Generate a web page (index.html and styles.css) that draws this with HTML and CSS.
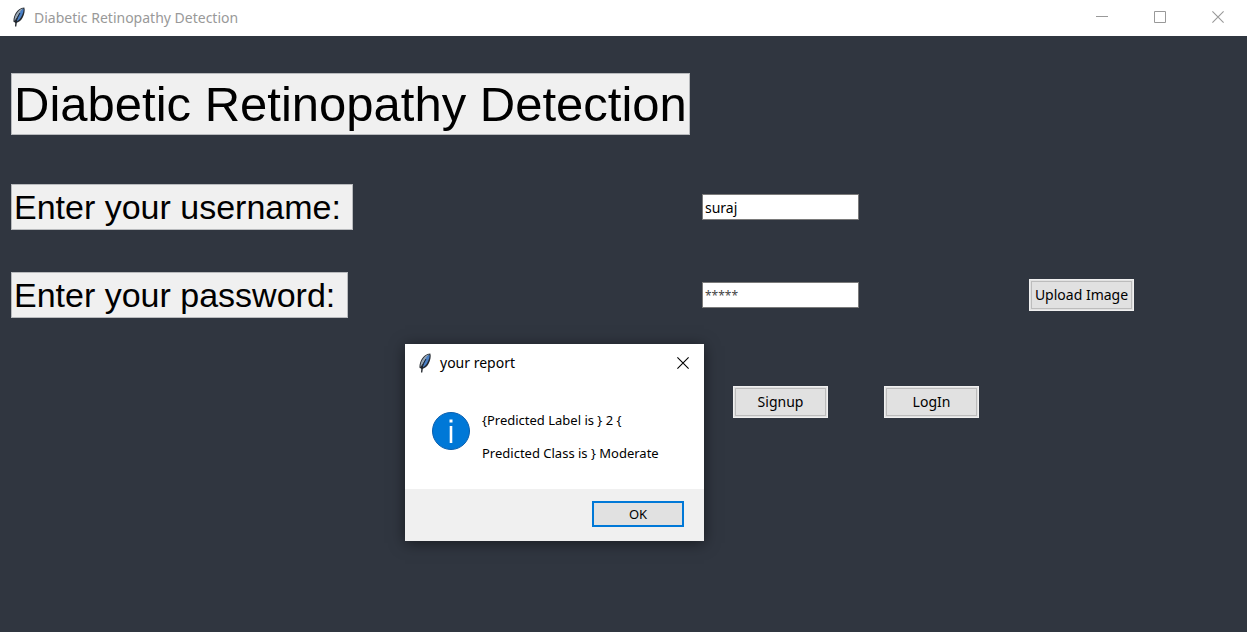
FILE: index.html
```html
<!DOCTYPE html>
<html lang="en">
<head>
<meta charset="utf-8">
<title>Diabetic Retinopathy Detection</title>
<link rel="stylesheet" href="styles.css">
</head>
<body>
<svg class="defs" width="0" height="0" aria-hidden="true">
  <symbol id="feather" viewBox="0 0 14 20">
    <path d="M12.300.4C8.500.6 5 3.300 3 7.500 1.700 10.300 1.200 13 1.600 15l1.700.5L3 19.500h1.300l.5-3.800c2.200-.4 4.500-2.300 5.900-5.200 1.700-3.400 2.600-7.200 1.600-10.100z" fill="#25292f"/>
    <path d="M11.200 1.200C8.200 1.800 5.300 4.500 3.700 8.100 2.700 10.300 2.300 12.500 2.500 14z" fill="#9aa8b5"/>
    <path d="M11.600 1.500C8.500 3 6.400 7 4.200 14.300c2-.5 4-2.300 5.200-4.800 1.400-2.700 2.500-5.500 2.200-8z" fill="#4a80c6"/>
    <path d="M8 6C6.500 8.500 5 11.500 3.700 16" fill="none" stroke="#19212c"/>
  </symbol>
  <symbol id="cross" viewBox="0 0 12 12">
    <path d="M.4.4l11.200 11.200M11.600.4L.4 11.600" fill="none" stroke="currentColor" stroke-width="1.100"/>
  </symbol>
</svg>

<header class="titlebar">
  <svg class="feather"><use href="#feather"/></svg>
  <span class="titlebar-text">Diabetic Retinopathy Detection</span>
  <div class="window-controls">
    <button class="window-button" type="button" aria-label="Minimize"><svg class="glyph" viewBox="0 0 12 12"><path d="M0 5.500h12" stroke="currentColor"/></svg></button>
    <button class="window-button" type="button" aria-label="Maximize"><svg class="glyph" viewBox="0 0 12 12"><path d="M.5.500h11v11H.5z" fill="none" stroke="currentColor"/></svg></button>
    <button class="window-button" type="button" aria-label="Close"><svg class="glyph"><use href="#cross"/></svg></button>
  </div>
</header>

<main class="window-body">
  <form class="login-form">
    <h1 class="heading">Diabetic Retinopathy Detection</h1>
    <label class="field-label username-label" for="username">Enter your username: </label>
    <input class="entry username-entry" id="username" type="text" value="suraj">
    <label class="field-label password-label" for="password">Enter your password: </label>
    <input class="entry masked password-entry" id="password" type="text" value="*****" autocomplete="off">
    <button class="button upload" type="button">Upload Image</button>
    <button class="button wide signup" type="button">Signup</button>
    <button class="button wide login" type="button">LogIn</button>
  </form>
</main>

<section class="dialog" role="dialog" aria-labelledby="dialog-title">
  <header class="dialog-bar">
    <svg class="feather"><use href="#feather"/></svg>
    <h2 class="dialog-title" id="dialog-title">your report</h2>
    <button class="dialog-close" type="button" aria-label="Close"><svg class="glyph"><use href="#cross"/></svg></button>
  </header>
  <div class="dialog-content">
    <svg class="info" viewBox="0 0 38 38" aria-hidden="true">
      <circle cx="19" cy="19" r="18.500" fill="#0078d7" stroke="#0a5fae"/>
      <path d="M17.500 7.500h3v3h-3zM17.700 14h2.600v17h-2.600z" fill="#fff"/>
    </svg>
    <div class="message">
      <p class="message-line">{Predicted Label is } 2 {</p>
      <p class="message-line">Predicted Class is } Moderate</p>
    </div>
  </div>
  <footer class="dialog-footer">
    <button class="ok" type="button">OK</button>
  </footer>
</section>
</body>
</html>
```
FILE: styles.css
```css
* {
  box-sizing: border-box;
}

body {
  margin: 0;
  min-height: 100vh;
  display: flex;
  flex-direction: column;
  background: #303640;
  color: #000;
  font-family: "Noto Sans", "Open Sans", sans-serif;
}

button,
input {
  font: inherit;
  color: inherit;
}

.defs {
  position: absolute;
}

.titlebar {
  display: flex;
  align-items: center;
  height: 36px;
  padding: 0 0 2px 12px;
  background: #fff;
  color: #999;
  font-size: 14px;
}

.feather {
  width: 14px;
  height: 20px;
  margin-right: 8px;
}

.titlebar-text {
  flex: 1;
}

.window-controls {
  display: flex;
}

.window-button {
  display: grid;
  place-items: center;
  width: 58px;
  height: 34px;
  padding: 0;
  border: 0;
  background: none;
}

.glyph {
  display: block;
  width: 12px;
  height: 12px;
}

.window-body {
  flex: 1;
  padding: 37px 0 0 11px;
}

.login-form {
  display: grid;
  grid-template-columns: 691fr 157fr 145fr 155fr 88fr;
  grid-template-rows: 62px 49px 46px 42px 46px 68px 32px;
  align-items: center;
  justify-items: center;
}

.heading,
.field-label {
  justify-self: start;
  grid-column: 1;
  margin: 0;
  border: 1px solid #b8babd;
  background: #f0f0f0;
  font-family: "Liberation Sans", Arial, sans-serif;
  font-weight: 400;
  white-space: pre;
}

.heading {
  grid-row: 1;
  padding: 0 2px;
  font-size: 49px;
  line-height: 60px;
}

.field-label {
  padding: 0 2px;
  font-size: 34px;
  line-height: 44px;
}

.username-label,
.username-entry {
  grid-row: 3;
}

.password-label,
.password-entry,
.upload {
  grid-row: 5;
}

.entry {
  grid-column: 2;
  width: 100%;
  height: 26px;
  padding: 0 2px;
  border: 1px solid #7a7a7a;
  background: #fff;
  font-size: 14px;
}

.masked {
  color: #444;
  font-size: 12px;
}

.button {
  height: 32px;
  padding: 0 5px;
  border: 1px solid #f0f0f0;
  outline: 1px solid #bcbcbc;
  outline-offset: -3px;
  background: #e1e1e1;
  font-size: 14px;
  line-height: 20px;
  white-space: nowrap;
}

.wide {
  width: 95px;
}

.upload {
  grid-column: 4;
}

.signup {
  grid-column: 2;
  grid-row: 7;
}

.login {
  grid-column: 3;
  grid-row: 7;
}

.dialog {
  position: absolute;
  top: 344px;
  left: 405px;
  width: 299px;
  background: #fff;
  box-shadow: 0 2px 14px rgba(0, 0, 0, 0.5);
}

.dialog-bar {
  display: flex;
  align-items: center;
  height: 37px;
  padding: 0 15px 0 13px;
}

.dialog-title {
  flex: 1;
  margin: 0;
  font-size: 14px;
  font-weight: 400;
}

.dialog-close {
  padding: 0;
  border: 0;
  background: none;
}

.dialog-content {
  display: flex;
  gap: 12px;
  padding: 31px 27px 27px;
}

.info {
  flex: none;
  width: 38px;
  height: 38px;
}

.message {
  display: grid;
  gap: 16px;
}

.message-line {
  margin: 0;
  font-size: 13px;
  line-height: 17px;
  white-space: nowrap;
}

.dialog-footer {
  display: flex;
  justify-content: flex-end;
  padding: 12px 20px 14px;
  background: #f0f0f0;
}

.ok {
  width: 92px;
  height: 26px;
  padding: 0;
  border: 2px solid #0078d7;
  background: #e1e1e1;
  font-size: 13px;
}
```
